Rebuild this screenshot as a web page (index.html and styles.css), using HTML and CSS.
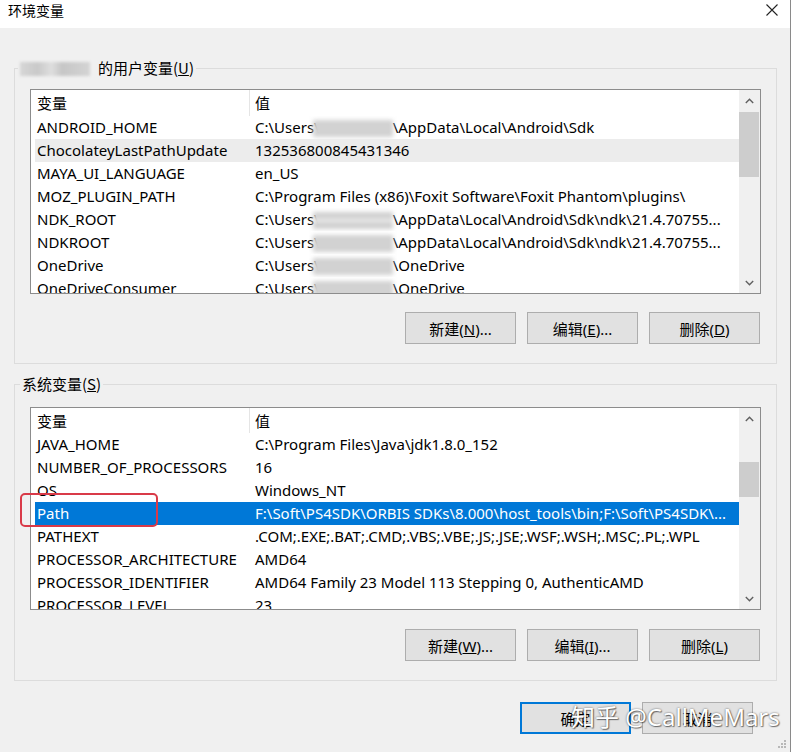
FILE: index.html
```html
<!DOCTYPE html>
<html lang="zh-CN">
<head>
    <meta charset="UTF-8">
    <title>环境变量</title>
    <link rel="stylesheet" href="styles.css">
</head>
<body>
    <div class="window">
        <div class="titlebar">
            <span class="title">环境变量</span>
            <svg class="close" width="12" height="12" viewBox="0 0 12 12">
                <path d="M0.5 0.5 L11.5 11.5 M11.5 0.5 L0.5 11.5" stroke="#222" stroke-width="1.1" fill="none"/>
            </svg>
        </div>

        <div class="content">
            <fieldset class="group group-user">
                <legend><span class="blur-name"></span>的用户变量(<u>U</u>)</legend>
                <div class="listview">
                    <div class="list-main">
                        <div class="list-header">
                            <div class="col-name">变量</div>
                            <div class="col-value">值</div>
                        </div>
                        <div class="row">
                            <div class="col-name">ANDROID_HOME</div>
                            <div class="col-value">C:\Users\<span class="blur-user"></span>\AppData\Local\Android\Sdk</div>
                        </div>
                        <div class="row hover">
                            <div class="col-name">ChocolateyLastPathUpdate</div>
                            <div class="col-value">132536800845431346</div>
                        </div>
                        <div class="row">
                            <div class="col-name">MAYA_UI_LANGUAGE</div>
                            <div class="col-value">en_US</div>
                        </div>
                        <div class="row">
                            <div class="col-name">MOZ_PLUGIN_PATH</div>
                            <div class="col-value">C:\Program Files (x86)\Foxit Software\Foxit Phantom\plugins\</div>
                        </div>
                        <div class="row">
                            <div class="col-name">NDK_ROOT</div>
                            <div class="col-value">C:\Users\<span class="blur-user smudge"></span>\AppData\Local\Android\Sdk\ndk\21.4.70755...</div>
                        </div>
                        <div class="row">
                            <div class="col-name">NDKROOT</div>
                            <div class="col-value">C:\Users\<span class="blur-user"></span>\AppData\Local\Android\Sdk\ndk\21.4.70755...</div>
                        </div>
                        <div class="row">
                            <div class="col-name">OneDrive</div>
                            <div class="col-value">C:\Users\<span class="blur-user"></span>\OneDrive</div>
                        </div>
                        <div class="row">
                            <div class="col-name">OneDriveConsumer</div>
                            <div class="col-value">C:\Users\<span class="blur-user"></span>\OneDrive</div>
                        </div>
                    </div>
                    <div class="scrollbar">
                        <div class="sb-btn">
                            <svg width="9" height="6" viewBox="0 0 9 6"><path d="M0.8 5 L4.5 1.3 L8.2 5" stroke="#606060" stroke-width="1.4" fill="none"/></svg>
                        </div>
                        <div class="sb-track"><div class="sb-thumb thumb-user"></div></div>
                        <div class="sb-btn">
                            <svg width="9" height="6" viewBox="0 0 9 6"><path d="M0.8 1 L4.5 4.7 L8.2 1" stroke="#606060" stroke-width="1.4" fill="none"/></svg>
                        </div>
                    </div>
                </div>
                <div class="buttons">
                    <button class="btn">新建(<u>N</u>)...</button>
                    <button class="btn">编辑(<u>E</u>)...</button>
                    <button class="btn">删除(<u>D</u>)</button>
                </div>
            </fieldset>

            <fieldset class="group group-sys">
                <legend>系统变量(<u>S</u>)</legend>
                <div class="listview">
                    <div class="list-main">
                        <div class="list-header">
                            <div class="col-name">变量</div>
                            <div class="col-value">值</div>
                        </div>
                        <div class="row">
                            <div class="col-name">JAVA_HOME</div>
                            <div class="col-value">C:\Program Files\Java\jdk1.8.0_152</div>
                        </div>
                        <div class="row">
                            <div class="col-name">NUMBER_OF_PROCESSORS</div>
                            <div class="col-value">16</div>
                        </div>
                        <div class="row">
                            <div class="col-name">OS</div>
                            <div class="col-value">Windows_NT</div>
                        </div>
                        <div class="row selected">
                            <div class="col-name">Path</div>
                            <div class="col-value">F:\Soft\PS4SDK\ORBIS SDKs\8.000\host_tools\bin;F:\Soft\PS4SDK\...</div>
                        </div>
                        <div class="row">
                            <div class="col-name">PATHEXT</div>
                            <div class="col-value">.COM;.EXE;.BAT;.CMD;.VBS;.VBE;.JS;.JSE;.WSF;.WSH;.MSC;.PL;.WPL</div>
                        </div>
                        <div class="row">
                            <div class="col-name">PROCESSOR_ARCHITECTURE</div>
                            <div class="col-value">AMD64</div>
                        </div>
                        <div class="row">
                            <div class="col-name">PROCESSOR_IDENTIFIER</div>
                            <div class="col-value">AMD64 Family 23 Model 113 Stepping 0, AuthenticAMD</div>
                        </div>
                        <div class="row">
                            <div class="col-name">PROCESSOR_LEVEL</div>
                            <div class="col-value">23</div>
                        </div>
                    </div>
                    <div class="scrollbar">
                        <div class="sb-btn">
                            <svg width="9" height="6" viewBox="0 0 9 6"><path d="M0.8 5 L4.5 1.3 L8.2 5" stroke="#606060" stroke-width="1.4" fill="none"/></svg>
                        </div>
                        <div class="sb-track"><div class="sb-thumb thumb-sys"></div></div>
                        <div class="sb-btn">
                            <svg width="9" height="6" viewBox="0 0 9 6"><path d="M0.8 1 L4.5 4.7 L8.2 1" stroke="#606060" stroke-width="1.4" fill="none"/></svg>
                        </div>
                    </div>
                </div>
                <div class="buttons">
                    <button class="btn">新建(<u>W</u>)...</button>
                    <button class="btn">编辑(<u>I</u>)...</button>
                    <button class="btn">删除(<u>L</u>)</button>
                </div>
            </fieldset>
        </div>

        <div class="footer">
            <button class="btn btn-default">确定</button>
            <button class="btn">取消</button>
        </div>

        <svg class="grip" width="8" height="8" viewBox="0 0 8 8">
            <rect x="6" y="0" width="2" height="2" fill="#b8b8b8"/>
            <rect x="3" y="3" width="2" height="2" fill="#b8b8b8"/>
            <rect x="6" y="3" width="2" height="2" fill="#b8b8b8"/>
            <rect x="0" y="6" width="2" height="2" fill="#b8b8b8"/>
            <rect x="3" y="6" width="2" height="2" fill="#b8b8b8"/>
            <rect x="6" y="6" width="2" height="2" fill="#b8b8b8"/>
        </svg>
    </div>

    <!-- annotation and watermark drawn over the dialog -->
    <div class="mark-path"></div>
    <div class="watermark">知乎 @CallMeMars</div>
</body>
</html>
```

FILE: styles.css
```css
* {
    margin: 0;
    padding: 0;
    box-sizing: border-box;
}

body {
    width: 796px;
    height: 752px;
    overflow: hidden;
    position: relative;
    background: #fff;
    font-family: "Noto Sans", "Noto Sans CJK SC", sans-serif;
    font-size: 15px;
    color: #000;
}

.window {
    width: 791px;
    height: 752px;
    background: #f0f0f0;
    border-right: 1px solid #8a8a8a;
    position: relative;
}

.titlebar {
    height: 28px;
    background: #fff;
    display: flex;
    justify-content: space-between;
    align-items: flex-start;
    padding: 0 12px 0 8px;
}

.title {
    font-family: "Noto Sans CJK SC", sans-serif;
    font-size: 14px;
    line-height: 20px;
}

.close {
    margin-top: 4px;
}

.content {
    padding: 30px 13px 0 14px;
}

.group {
    border: 1px solid #dcdcdc;
    padding: 11px 15px 19px 15px;
    min-width: 0;
}

.group legend {
    padding: 0 2px;
    line-height: 20px;
    margin-left: -12px;
    font-family: "Noto Sans CJK SC", sans-serif;
}

.group-sys {
    margin-top: 10px;
    padding-top: 13px;
}

.group-sys legend {
    margin-left: -10px;
}

.blur-name {
    display: inline-block;
    width: 70px;
    height: 14px;
    margin-right: 8px;
    vertical-align: -2px;
    background: linear-gradient(90deg, #d6d6d6 0%, #c9c9c9 25%, #dedede 45%, #c6c6c6 60%, #d4d4d4 100%);
    filter: blur(1.5px);
}

.listview {
    display: flex;
    height: 205px;
    border: 1px solid #8c8c8c;
    background: #fff;
    overflow: hidden;
}

.group-sys .listview {
    height: 203px;
}

.list-main {
    flex: 1;
    min-width: 0;
    padding-left: 4px;
    overflow: hidden;
}

.list-header {
    display: flex;
    height: 26px;
    line-height: 26px;
}

.list-header .col-name {
    width: 215px;
    padding-left: 2px;
    border-right: 1px solid #e5e5e5;
    font-family: "Noto Sans CJK SC", sans-serif;
}

.list-header .col-value {
    padding-left: 5px;
    font-family: "Noto Sans CJK SC", sans-serif;
}

.group-sys .list-header {
    height: 25px;
    line-height: 25px;
}

.row {
    display: flex;
    height: 23px;
    line-height: 23px;
    white-space: nowrap;
}

.row .col-name {
    flex: none;
    width: 218px;
    padding-left: 2px;
    overflow: hidden;
}

.row .col-value {
    flex: 1;
    padding-left: 2px;
    overflow: hidden;
}

.row.hover {
    background: #ececec;
}

.row.selected {
    background: #0078d7;
    color: #fff;
}

.blur-user {
    display: inline-block;
    width: 80px;
    height: 17px;
    margin-left: -7px;
    vertical-align: -4px;
    background: #d2d2d2;
    filter: blur(2px);
}

.blur-user.smudge {
    background: linear-gradient(180deg, #d0d0d0 0%, #d0d0d0 35%, #f4f4f4 50%, #cfcfcf 65%, #cfcfcf 100%);
}

.scrollbar {
    flex: none;
    width: 21px;
    display: flex;
    flex-direction: column;
    background: #f0f0f0;
}

.sb-btn {
    height: 21px;
    display: flex;
    align-items: center;
    justify-content: center;
}

.sb-track {
    flex: 1;
}

.sb-thumb {
    background: #cdcdcd;
    margin-right: 1px;
}

.thumb-user {
    margin-top: 1px;
    height: 65px;
}

.thumb-sys {
    margin-top: 33px;
    height: 35px;
}

.buttons {
    display: flex;
    justify-content: flex-end;
    gap: 11px;
    padding-right: 1px;
    margin-top: 18px;
}

.group-sys .buttons {
    margin-top: 19px;
}

.btn {
    width: 111px;
    height: 32px;
    background: #e1e1e1;
    border: 1px solid #adadad;
    font-family: "Noto Sans", "Noto Sans CJK SC", sans-serif;
    font-size: 15px;
    color: #000;
}

.btn-default {
    border-color: #0078d7;
    box-shadow: inset 0 0 0 1px #0078d7;
}

.footer {
    display: flex;
    justify-content: flex-end;
    gap: 11px;
    padding-right: 37px;
    margin-top: 21px;
}

.grip {
    position: absolute;
    right: 4px;
    bottom: 4px;
}

.mark-path {
    position: absolute;
    left: 20px;
    top: 493px;
    width: 138px;
    height: 34px;
    border: 2px solid #d93a48;
    border-radius: 5px;
}

.watermark {
    position: absolute;
    left: 571px;
    top: 702px;
    font-size: 24px;
    line-height: 30px;
    color: #fff;
    white-space: nowrap;
    text-shadow: 0 0 2px rgba(0, 0, 0, 0.6), 1px 1px 1px rgba(0, 0, 0, 0.45);
}
```
